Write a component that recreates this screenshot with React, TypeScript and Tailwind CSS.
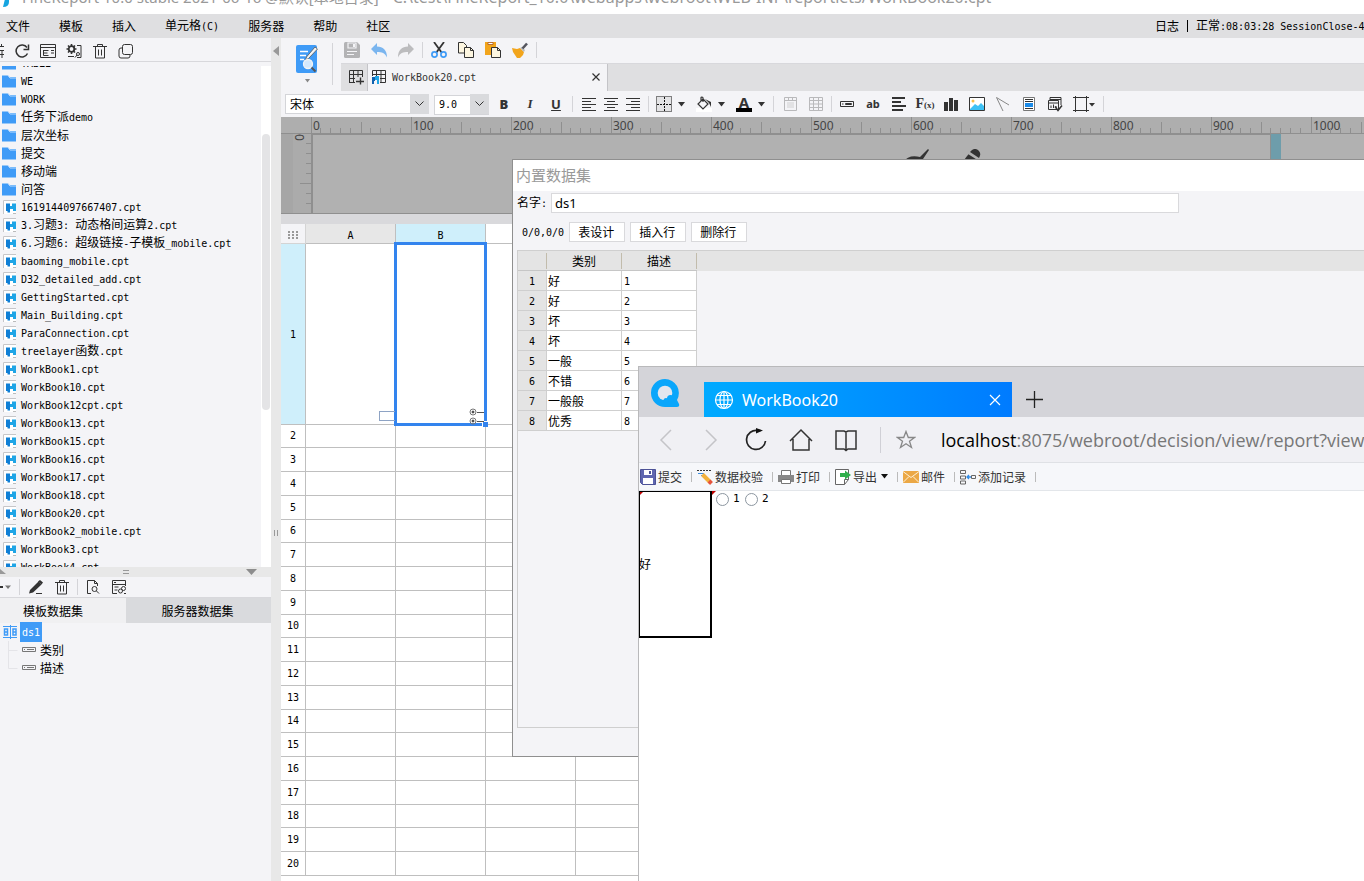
import type { ReactNode } from "react";

const CJK = "font-['Noto_Sans_CJK_SC',sans-serif] text-[12px]";
const MONO = "font-['DejaVu_Sans_Mono',monospace] text-[10px]";

/* Chinese runs keep the 12px face, Latin runs use the half-width face. */
function T({ children }: { children: string }) {
  const parts = children.match(/[\x00-\x7f]+|[^\x00-\x7f]+/g) ?? [];
  return (
    <span className="whitespace-pre">
      {parts.map((p, i) => (
        <span key={i} className={/^[\x00-\x7f]/.test(p) ? MONO : CJK}>
          {p}
        </span>
      ))}
    </span>
  );
}

function Svg({ children, w = 16, h = 16 }: { children: ReactNode; w?: number; h?: number }) {
  return (
    <svg width={w} height={h} viewBox={`0 0 ${w} ${h}`} fill="none" stroke="#333" className="block shrink-0" aria-hidden="true">
      {children}
    </svg>
  );
}

function Btn({ label, children }: { label: string; children: ReactNode }) {
  return (
    <button type="button" aria-label={label} className="flex shrink-0 items-center justify-center">
      {children}
    </button>
  );
}

const Sep = ({ tight = false }: { tight?: boolean }) => (
  <span className={`${tight ? "mx-[7px]" : "mx-2"} h-4 w-px shrink-0 bg-[#d4d4d8]`} />
);

const Caret = () => (
  <Svg w={7} h={5}>
    <path d="M0 0h7L3.500 4.500z" fill="#333" stroke="none" />
  </Svg>
);

/* ---------- menu ---------- */

const MENUS = ["文件", "模板", "插入", "单元格(C)", "服务器", "帮助", "社区"];

function MenuBar() {
  return (
    <nav className="flex h-6 shrink-0 items-center justify-between overflow-hidden bg-[#dfdfe1] pl-1.5 leading-6">
      <div className="flex gap-[29px]">
        {MENUS.map((m) => (
          <button key={m} type="button" className="leading-6">
            <T>{m}</T>
          </button>
        ))}
      </div>
      <div className="flex w-[209px] items-center gap-2 overflow-hidden">
        <T>日志</T>
        <span className="h-3 w-px shrink-0 bg-black" />
        <T>正常:08:03:28 SessionClose-4</T>
      </div>
    </nav>
  );
}

/* ---------- left side ---------- */

const Folder = () => (
  <Svg>
    <path d="M2 2.500h6l1.500 1.500H16v10.500H2z" fill="#3f9bf7" stroke="none" />
    <path d="M8 2.500l2 2.500H16" stroke="#b9dcff" />
  </Svg>
);

const CptFile = () => (
  <Svg>
    <path d="M3 1h13v14H3z" fill="#fff" stroke="none" />
    <path d="M3.500 15V1.500H16" stroke="#c6c6c9" />
    <path d="M6 4.500h4v9H7.500V12H6z" fill="#0f7fd6" stroke="none" />
    <path d="M10 7h2V4.500h4V12h-3v-2h-3z" fill="#1fa5e6" stroke="none" />
    <path d="M13 14.500h3" stroke="#bbb" />
  </Svg>
);

const FOLDERS = ["TABLE", "WE", "WORK", "任务下派demo", "层次坐标", "提交", "移动端", "问答"];
const FILES = [
  "1619144097667407.cpt",
  "3.习题3: 动态格间运算2.cpt",
  "6.习题6: 超级链接-子模板_mobile.cpt",
  "baoming_mobile.cpt",
  "D32_detailed_add.cpt",
  "GettingStarted.cpt",
  "Main_Building.cpt",
  "ParaConnection.cpt",
  "treelayer函数.cpt",
  "WorkBook1.cpt",
  "WorkBook10.cpt",
  "WorkBook12cpt.cpt",
  "WorkBook13.cpt",
  "WorkBook15.cpt",
  "WorkBook16.cpt",
  "WorkBook17.cpt",
  "WorkBook18.cpt",
  "WorkBook20.cpt",
  "WorkBook2_mobile.cpt",
  "WorkBook3.cpt",
  "WorkBook4.cpt",
];

const Trash = () => (
  <Svg>
    <path d="M1 3.500h14M5.500 3V1.500h5V3M3.500 4v11h9V4M6.500 6.500v6M9.500 6.500v6" />
  </Svg>
);

function LeftPanel() {
  return (
    <aside className="flex w-[271px] shrink-0 flex-col bg-[#f4f4f7]">
      <div className="flex h-6 shrink-0 items-center gap-2.5 overflow-hidden border-b border-[#d8d8dc] pt-0.5">
        <Btn label="重命名">
          <Svg w={4}>
            <path d="M0 3.500h4M0 7.500h4M2 7v8M0 11.500h4M1.500 1v3" />
          </Svg>
        </Btn>
        <Btn label="刷新">
          <Svg>
            <path d="M13.500 10.500A6 6 0 1 1 13 4.500" strokeWidth="1.500" />
            <path d="M14.500 1.500v5h-5" strokeWidth="1.500" />
          </Svg>
        </Btn>
        <Btn label="目录">
          <Svg>
            <path d="M.5 1.500h15v13H.5zM.5 4.500h15M3.500 7v5.500M3.500 7.500h5M3.500 10h4M3.500 12.500h5M11 7.500h3M11 10h3" />
          </Svg>
        </Btn>
        <Btn label="设置">
          <Svg>
            <circle cx="5.500" cy="6" r="2.800" strokeWidth="1.800" />
            <path d="M5.500 1v2M5.500 9v2M.5 6h2M8.500 6h2M2 2.500l1.500 1.500M9 2.500L7.500 4M2 9.500L3.500 8M9 9.500L7.500 8" strokeWidth="1.600" />
            <path d="M11 2.500h4v12h-4M2 13.500h6" />
            <circle cx="12" cy="11" r="1.500" />
            <path d="M11 12l-2 2.500" />
          </Svg>
        </Btn>
        <Btn label="删除">
          <Trash />
        </Btn>
        <Btn label="复制">
          <Svg>
            <rect x="4.500" y="1.500" width="10" height="10" rx="2" />
            <path d="M4 5H3a2 2 0 0 0-2 2v6a2 2 0 0 0 2 2h7a2 2 0 0 0 2-2v-1" />
          </Svg>
        </Btn>
      </div>

      <div className="mt-1 flex h-[501px] shrink-0 overflow-hidden">
        <ul className="-mt-3 min-w-0 flex-1">
          {FOLDERS.map((f) => (
            <li key={f} className="flex h-[18px] items-center gap-[5px] leading-[18px]">
              <Folder />
              <T>{f}</T>
            </li>
          ))}
          {FILES.map((f) => (
            <li key={f} className="flex h-[18px] items-center gap-[5px] leading-[18px]">
              <CptFile />
              <T>{f}</T>
            </li>
          ))}
        </ul>
        <div className="w-2.5 bg-white px-px pt-[68px]">
          <div className="h-[276px] rounded-full bg-[#e4e4e6]" />
        </div>
      </div>

      <div className="flex h-2.5 shrink-0 items-center justify-between bg-[#e8e8e8] pr-3.5">
        <Svg w={6} h={6}>
          <path d="M0 0l6 5H0z" fill="#999" stroke="none" />
        </Svg>
        <Svg w={6} h={6}>
          <path d="M0 1.500h6M0 4.500h6" stroke="#999" />
        </Svg>
        <Svg w={11} h={6}>
          <path d="M0 0h11L5.500 6z" fill="#8d8d8d" stroke="none" />
        </Svg>
      </div>

      <div className="flex h-[21px] shrink-0 items-center overflow-hidden border-b border-[#d8d8dc]">
        <Btn label="添加数据集">
          <Svg w={11}>
            <path d="M0 8h3" strokeWidth="2" />
            <path d="M5 6.500h6L8 10z" fill="#777" stroke="none" />
          </Svg>
        </Btn>
        <Sep />
        <div className="flex gap-2.5">
          <Btn label="编辑">
            <Svg>
              <path d="M2 11L10.500 2.500l3 3L5 13.500 1 14.500z" fill="#333" stroke="none" />
              <path d="M10 2.500l2-1.500 3 2.500-1.500 2z" fill="#333" stroke="none" />
              <path d="M8 14.500h6" />
            </Svg>
          </Btn>
          <Btn label="删除数据集">
            <Trash />
          </Btn>
        </div>
        <Sep tight />
        <div className="flex gap-2.5">
          <Btn label="预览">
            <Svg>
              <path d="M6 14.500H2.500v-13h7l3 3V7M9.500 1.500v3h3" />
              <circle cx="9.500" cy="10" r="2.500" />
              <path d="M11.500 12l2.500 2.500" />
            </Svg>
          </Btn>
          <Btn label="连接">
            <Svg>
              <path d="M14.500 7V1.500H1.500v13H6M1.500 5.500h13M3 3.500h2M3.500 8h4M3.500 11h3" />
              <circle cx="9.500" cy="12" r="2" />
              <circle cx="12.500" cy="9.500" r="2" />
              <path d="M13 14.500h2" />
            </Svg>
          </Btn>
        </div>
      </div>

      <div className="flex h-[25px] shrink-0 leading-6">
        <button type="button" className="w-[126px] bg-[#f0f0f2] pr-5 leading-6">
          <T>模板数据集</T>
        </button>
        <button type="button" className="flex-1 bg-[#d9dadd] pr-0.5 leading-6">
          <T>服务器数据集</T>
        </button>
      </div>
      <ul className="leading-[18px]">
        <li className="flex h-[18px] items-center gap-0.5 pl-0.5">
          <Svg>
            <path d="M1 2.500h14M1 13.500h14M8.500 1v14" stroke="#3f9bf7" />
            <path d="M2.500 5h3v6h-3zM2.500 8h3M11 5h3v6h-3zM11 8h3" stroke="#3f9bf7" strokeWidth="1.500" />
          </Svg>
          <span className="bg-[#3f9bf7] px-0.5 text-white">
            <T>ds1</T>
          </span>
        </li>
        {["类别", "描述"].map((f) => (
          <li key={f} className="flex h-[18px] items-center gap-1 pl-2">
            <Svg w={28} h={18}>
              <path d={f === "类别" ? "M.5 0v18M.5 9.500h9" : "M.5 0v9.500h9"} stroke="#e4e4e8" />
              <path d="M14.500 6.500h13v4h-13z" stroke="#777" />
              <path d="M16 8.500h1M19 8.500h7" stroke="#777" />
            </Svg>
            <T>{f}</T>
          </li>
        ))}
      </ul>
    </aside>
  );
}

/* ---------- toolbars ---------- */

function QuickTools() {
  return (
    <div className="flex h-[25px] items-center pb-0.5 pl-[3px]">
      <div className="flex gap-[11px]">
        <Btn label="保存">
          <Svg>
            <path d="M0 1.500Q0 0 1.500 0H13l3 3v11.500q0 1.500-1.500 1.500h-13Q0 16 0 14.500z" fill="#b3b3b5" stroke="none" />
            <path d="M4 1h8v5H4zM3 9.500h10M3 12.500h7" stroke="#f4f4f7" strokeWidth="1.200" />
            <path d="M9 2h2v3H9z" fill="#f4f4f7" stroke="none" />
          </Svg>
        </Btn>
        <Btn label="撤销">
          <Svg>
            <path d="M6 1v3.500c6 0 10 3.500 10 11-2-4.500-5-5.500-10-5.500v3L0 7z" fill="#7ab5ef" stroke="none" />
          </Svg>
        </Btn>
        <Btn label="重做">
          <Svg>
            <path d="M10 1v3.500c-6 0-10 3.500-10 11 2-4.500 5-5.500 10-5.500v3L16 7z" fill="#bcbcbe" stroke="none" />
          </Svg>
        </Btn>
      </div>
      <Sep />
      <div className="flex gap-[11px]">
        <Btn label="剪切">
          <Svg>
            <path d="M3 0l8 11M13 0L5 11" strokeWidth="1.800" />
            <circle cx="3.500" cy="12.500" r="2.600" stroke="#3f9bf7" strokeWidth="1.700" />
            <circle cx="12.500" cy="12.500" r="2.600" stroke="#3f9bf7" strokeWidth="1.700" />
          </Svg>
        </Btn>
        <Btn label="复制单元格">
          <Svg>
            <path d="M.5.500h5l3 3V11h-8z" fill="#fdf6e0" />
            <path d="M6.500 5.500h6l3 3v7h-9z" fill="#fdf6e0" />
            <path d="M12.500 5.500v3h3" />
          </Svg>
        </Btn>
        <Btn label="粘贴">
          <Svg>
            <path d="M0 0h11v13H0z" fill="#f2a51c" stroke="none" />
            <path d="M3 .5h5v2H3z" fill="#fff" stroke="#a8561d" strokeWidth=".8" />
            <path d="M6.500 5.500h6l3 3v7h-9z" fill="#fdf6e0" />
            <path d="M12.500 5.500v3h3" />
          </Svg>
        </Btn>
        <Btn label="格式刷">
          <Svg>
            <path d="M0 6l5 1 3-1 4 4-1 3-3 3H5L1 10z" fill="#f2a51c" stroke="none" />
            <path d="M8 6l2-1 3 3-1 2z" fill="#bbb" stroke="none" />
            <path d="M10.500 6.500L15 1.500" stroke="#55565f" strokeWidth="2.600" />
          </Svg>
        </Btn>
      </div>
      <Sep />
    </div>
  );
}

const GridIcon = ({ children }: { children?: ReactNode }) => (
  <Svg>
    <path d="M1.500 14V1.500h13V9M1.500 5.500h13M1.500 9.500h13M5.500 1.500V14M10 1.500V9M1.500 13.500H7" />
    {children}
  </Svg>
);

function TabStrip() {
  return (
    <div className="flex h-7 border-t border-[#d8d8dc] bg-[#dfdfe1]">
      <button type="button" aria-label="新建" className="flex w-[27px] items-center justify-center border-r border-[#c4c4c8] pb-0.5 pl-1">
        <GridIcon>
          <path d="M7 8h9v8H7z" fill="#dfdfe1" stroke="none" />
          <path d="M8 12.500h8M12.500 8.500v7" strokeWidth="1.400" />
        </GridIcon>
      </button>
      <div className="flex w-60 items-center gap-[5px] border-r border-[#c4c4c8] bg-[#f4f4f7] pr-[5px] pb-0.5 pl-[3px] leading-6 text-[#333]">
        <Svg>
          <path d="M1.500 7V1.500h13v12H9M1.500 5.500h13M9 9.500h5.500M5.500 1.500V7M10 1.500V14" />
          <path d="M1 8h3v4H3v3H1z" fill="#0f62b0" stroke="none" />
          <path d="M4 7h4v8H6v-4H4z" fill="#1fa5e6" stroke="none" />
        </Svg>
        <span className="flex-1">
          <T>WorkBook20.cpt</T>
        </span>
        <Btn label="关闭">
          <Svg w={12} h={12}>
            <path d="M2.500 2.500l7 7M9.500 2.500l-7 7" strokeWidth="1.200" />
          </Svg>
        </Btn>
      </div>
    </div>
  );
}

const AlignIcon = ({ d }: { d: string }) => (
  <Svg>
    <path d={d} />
  </Svg>
);

function FormatBar() {
  const selectCls = "h-full w-full appearance-none border border-[#d4d5d9] bg-white pl-1 text-black outline-none";
  const arrow = (
    <span className="pointer-events-none absolute inset-y-0 right-0 flex w-[19px] items-center justify-center bg-[#d9dadd]">
      <Svg w={9} h={6}>
        <path d="M.5.500l4 4 4-4" />
      </Svg>
    </span>
  );
  return (
    <div className="flex h-[26px] shrink-0 items-center overflow-hidden pl-1">
      <label className="relative h-5 w-36 shrink-0">
        <select aria-label="字体" className={`${selectCls} ${CJK}`}>
          <option>宋体</option>
        </select>
        {arrow}
      </label>
      <label className="relative ml-[5px] h-5 w-[55px] shrink-0">
        <select aria-label="字号" className={`${selectCls} ${MONO}`}>
          <option>9.0</option>
        </select>
        {arrow}
      </label>
      <div className="ml-[7px] flex gap-2.5 font-['Noto_Sans',sans-serif] text-[13px] leading-4 text-[#333]">
        <button type="button" className="w-4 font-black">B</button>
        <button type="button" className="w-4 font-['Liberation_Serif',serif] font-bold italic">I</button>
        <button type="button" className="w-4 font-bold underline">U</button>
      </div>
      <Sep />
      <div className="flex gap-1.5">
        <Btn label="左对齐"><AlignIcon d="M1 2.500h14M1 5.500h9M1 8.500h14M1 11.500h9M1 14.500h14" /></Btn>
        <Btn label="居中"><AlignIcon d="M1 2.500h14M4 5.500h8M1 8.500h14M4 11.500h8M1 14.500h14" /></Btn>
        <Btn label="右对齐"><AlignIcon d="M1 2.500h14M6 5.500h9M1 8.500h14M6 11.500h9M1 14.500h14" /></Btn>
      </div>
      <Sep tight />
      <div className="flex gap-[11px]">
        <button type="button" aria-label="边框" className="flex items-center gap-1.5">
          <Svg>
            <path d="M.5.500h15v15H.5z" fill="#e3e3e5" stroke="#111" strokeDasharray="1 1" />
            <path d="M8.500 1v14M1 8.500h14" stroke="#111" strokeDasharray="2 1" />
          </Svg>
          <Caret />
        </button>
        <button type="button" aria-label="填充" className="flex items-center gap-1.5">
          <Svg>
            <path d="M0 12h16v4H0z" fill="#fff" stroke="none" />
            <path d="M7 3l5 5-5 5-5-5zM5 6V2q0-1 1-1t1 1v4" strokeWidth="1.200" />
            <path d="M9 3l6 3v5l-2-4z" fill="#333" stroke="none" />
          </Svg>
          <Caret />
        </button>
        <button type="button" aria-label="字体颜色" className="flex items-center gap-1.5">
          <span className="flex h-4 w-4 items-center justify-center border-b-4 border-black font-['Noto_Sans',sans-serif] text-[15px] leading-3 font-bold text-[#333]">
            A
          </span>
          <Caret />
        </button>
      </div>
      <Sep />
      <div className="flex gap-2.5">
        <Btn label="合并">
          <Svg>
            <path d="M2.500 1.500h12v13h-12zM2.500 4.500h12M6.500 1.500v3M10.500 1.500v3" stroke="#b9b9bb" />
            <path d="M5 6h7v6H5z" fill="#e2e2e4" stroke="none" />
          </Svg>
        </Btn>
        <Btn label="拆分">
          <Svg>
            <path d="M1.500 1.500h13v13h-13zM1.500 4.500h13M1.500 8h13M1.500 11.500h13M5.500 1.500v13M10.500 1.500v13" stroke="#b9b9bb" />
          </Svg>
        </Btn>
      </div>
      <Sep tight />
      <div className="flex items-center gap-2.5">
        <Btn label="控件">
          <Svg>
            <path d="M1.500 5.500h13v5h-13z" />
            <path d="M3 8h1.500M6.500 7.500h6v1h-6z" />
          </Svg>
        </Btn>
        <button type="button" className="flex w-4 justify-center font-['Noto_Sans',sans-serif] text-[11px] leading-4 font-bold text-[#333]">ab</button>
        <Btn label="富文本">
          <Svg>
            <path d="M1 2h13M1 6h9M1 10h14M1 14h11" strokeWidth="2" />
          </Svg>
        </Btn>
        <button
          type="button"
          className="flex w-4 items-baseline justify-center whitespace-nowrap font-['Liberation_Serif',serif] text-[14px] leading-4 font-bold text-[#333]"
        >
          F<span className="text-[9px]">(x)</span>
        </button>
        <Btn label="图表">
          <Svg>
            <path d="M1 6h4v9H1zM6 2h4v13H6zM11 4h4v11h-4z" fill="#333" stroke="none" />
          </Svg>
        </Btn>
        <Btn label="图片">
          <Svg>
            <path d="M.5 1.500h15v13H.5z" fill="#fff" />
            <circle cx="4" cy="5" r="1.500" fill="#f7c04a" stroke="none" />
            <path d="M1 13l5-5 3 2 3-3 3 3v4H1z" fill="#3dc1f5" stroke="none" />
          </Svg>
        </Btn>
        <Btn label="斜线">
          <Svg>
            <path d="M1.500 1.500L14 9M1.500 1.500L8 15" stroke="#888" />
          </Svg>
        </Btn>
        <Btn label="子报表">
          <Svg>
            <path d="M2.500 1.500h11v13h-11z" fill="#fff" stroke="#777" />
            <path d="M4 3.500h8M4 5.500h8M4 12.500h8" />
            <path d="M4 7h8v4H4z" fill="#1a8ae8" stroke="none" />
          </Svg>
        </Btn>
        <Btn label="悬浮元素">
          <Svg>
            <path d="M3 4V1.500h11V9M3 3.500h11M1.500 4.500h10v9h-10zM1.500 7h10M4 12V9.500M6.500 12V8.500M9 12v-2" />
            <path d="M8 10.500l3 4 4-5" strokeWidth="1.500" />
          </Svg>
        </Btn>
        <button type="button" aria-label="形状" className="flex items-center">
          <Svg>
            <path d="M2.500 0v16M13.500 0v16M0 1.500h16M0 14.500h16" />
          </Svg>
          <Svg w={6} h={5}>
            <path d="M0 1h6L3 4.500z" fill="#333" stroke="none" />
          </Svg>
        </button>
      </div>
      <Sep />
    </div>
  );
}

/* ---------- ruler ---------- */

const HUNDREDS = Array.from({ length: 20 }, (_, i) => i * 100);
const TICKS = [10, 20, 30, 40, 60, 70, 80, 90].map((x) => `M${x}.5 11v5`).join("");

function Ruler() {
  return (
    <div className="flex h-[97px] shrink-0 flex-col overflow-hidden bg-[#b1b1b1]">
      <div className="flex h-[17px] shrink-0 overflow-hidden border-b border-[#8f8f8f] bg-[#aeaeae] pl-[29px]">
        {HUNDREDS.map((n) => (
          <div key={n} className="relative w-[100px] shrink-0 pl-[3px] font-['Noto_Sans',sans-serif] text-[12px] leading-[17px] text-[#444]">
            <svg width="100" height="16" className="absolute inset-0" fill="none" stroke="#8f8f8f" aria-hidden="true">
              <path d={`M1.5 0v16M51.5 5v11${TICKS}`} />
            </svg>
            {n}
          </div>
        ))}
      </div>
      <div className="flex min-h-0 flex-1 border-b border-[#8f8f8f]">
        <div className="flex w-8 justify-end border-r-2 border-[#8f8f8f] bg-[#a6a6a6]">
          <div className="flex w-[18px] items-start justify-between bg-[#ababab]">
            <span className="font-['Noto_Sans',sans-serif] text-[12px] leading-3 text-[#444] [writing-mode:vertical-rl]">0</span>
            <svg width="11" height="79" className="-ml-3 shrink-0" fill="none" stroke="#8f8f8f" aria-hidden="true">
              <path d="M6 9.500h5M6 19.500h5M6 29.500h5M6 39.500h5M0 49.500h11M6 59.500h5M6 69.500h5" />
            </svg>
          </div>
        </div>
        <div className="flex w-[958px] shrink-0 items-start justify-center gap-8 border-t border-r border-[#8f8f8f] pt-3.5 pl-[300px]">
          <Svg w={26} h={26}>
            <path d="M0 13Q6 5 17 8L25 0l1 1-8 12q-4 8-11 12z" fill="#333" stroke="none" />
          </Svg>
          <Svg w={20} h={26}>
            <path d="M9 3q4-5 8-2t1 8z" fill="#333" stroke="none" />
            <path d="M8 4.500l9 6-11 13-6 2V15z" fill="#333" stroke="none" />
            <path d="M7 4l11 7" stroke="#b1b1b1" strokeWidth="1.500" />
          </Svg>
        </div>
        <div className="w-2.5 shrink-0 bg-[#6e9dab]" />
      </div>
    </div>
  );
}

/* ---------- sheet ---------- */

const ROWS = Array.from({ length: 19 }, (_, i) => i + 2);
const COLS = Array.from({ length: 14 }, (_, i) => i);

function Sheet() {
  const cell = "border-r border-b border-[#bfbfbf]";
  return (
    <div className="relative min-h-0 flex-1 overflow-hidden bg-white">
      <table className="w-max table-fixed border-separate border-spacing-0 text-center leading-4">
        <colgroup>
          <col className="w-[25px]" />
          {COLS.map((c) => (
            <col key={c} className="w-[90px]" />
          ))}
        </colgroup>
        <thead>
          <tr className="h-5">
            <th className="h-5 w-[25px] border-r border-b border-[#d4d4d4] bg-[#f4f4f7] p-0">
              <div className="flex justify-center pt-0.5">
                <Svg w={10} h={8}>
                  <path d="M0 1h10M0 4h10M0 7h10" stroke="#999" strokeWidth="2" strokeDasharray="2 2" />
                </Svg>
              </div>
            </th>
            {COLS.map((c) => (
              <th
                key={c}
                className={`${cell} w-[90px] p-0 font-normal ${c === 0 ? "bg-[#e7e7e7]" : c === 1 ? "bg-[#cfeffb]" : "bg-white"}`}
              >
                <div className="flex h-[19px] items-center justify-center pt-0.5">{c === 0 ? <T>A</T> : c === 1 ? <T>B</T> : null}</div>
              </th>
            ))}
          </tr>
        </thead>
        <tbody>
          <tr className="h-[181px]">
            <th className={`${cell} bg-[#cfeffb] p-0 font-normal`}>
              <T>1</T>
            </th>
            {COLS.map((c) => (
              <td key={c} className={`${cell} p-0`} />
            ))}
          </tr>
          {ROWS.map((r, i) => (
            <tr key={r} className={i % 4 === 0 ? "h-[23px]" : "h-6"}>
              <th className={`${cell} p-0 font-['DejaVu_Sans_Mono',monospace] text-[10px] leading-4 font-normal`}>{r}</th>
              {COLS.map((c) => (
                <td key={c} className={`${cell} p-0`} />
              ))}
            </tr>
          ))}
        </tbody>
      </table>
      <div className="absolute top-[18px] left-[113px] h-[184px] w-[93px] border-3 border-[#3384ee]">
        <span className="absolute -right-1 -bottom-1 size-1.5 border-t border-l border-white bg-[#3384ee]" />
        <span className="absolute right-0 -bottom-0.5">
          <Svg w={15} h={18}>
            <circle cx="4" cy="5" r="3" stroke="#777" />
            <circle cx="4" cy="5" r="1" fill="#444" stroke="#444" />
            <circle cx="4" cy="14" r="3" stroke="#777" />
            <circle cx="4" cy="14" r="1" fill="#444" stroke="#444" />
            <path d="M8 5.500h7M8 14.500h7" stroke="#555" />
          </Svg>
        </span>
      </div>
      <span className="absolute top-[187px] left-[98px] h-2.5 w-4 border border-r-0 border-[#8ea3c4]" />
    </div>
  );
}

/* ---------- data set dialog ---------- */

const DATA: [string, string][] = [
  ["好", "1"],
  ["好", "2"],
  ["坏", "3"],
  ["坏", "4"],
  ["一般", "5"],
  ["不错", "6"],
  ["一般般", "7"],
  ["优秀", "8"],
];

function DataDialog() {
  return (
    <section className="absolute top-[159px] right-0 left-[512px] flex h-[598px] flex-col border border-r-0 border-[#8f8f8f] bg-[#f4f4f7]">
      <h2 className="h-[31px] shrink-0 bg-white pl-[3px] font-['Noto_Sans_CJK_SC',sans-serif] text-[15px] leading-[29px] text-[#999]">内置数据集</h2>
      <div className="mt-0.5 flex h-5 shrink-0 items-center gap-[5px] pl-1">
        <label htmlFor="ds-name" className="w-[29px] leading-5">
          <T>名字:</T>
        </label>
        <input
          id="ds-name"
          defaultValue="ds1"
          className="h-5 w-[628px] border border-[#d9d9dc] bg-white pl-[3px] font-['Noto_Sans',sans-serif] text-[13px] text-black outline-none"
        />
      </div>
      <div className="mt-[9px] flex h-5 shrink-0 items-center gap-[5px] pl-[9px] leading-5">
        <T>0/0,0/0</T>
        {["表设计", "插入行", "删除行"].map((b) => (
          <button key={b} type="button" className="h-5 w-14 border border-[#d9d9dc] bg-white pr-0.5 leading-[18px]">
            <T>{b}</T>
          </button>
        ))}
      </div>
      <div className="mt-2 mb-7 ml-1 min-h-0 flex-1 border border-r-0 border-[#cfcfcf]">
        <div className="h-full bg-[linear-gradient(#e4e4e4_20px,transparent_20px)]">
          <table className="w-[179px] table-fixed border-separate border-spacing-0 leading-4">
            <thead>
              <tr className="h-5">
                <th className="w-[29px] border-b border-[#c6c6c6] p-0">
                  <div className="h-4 border-r border-[#c2bcac]" />
                </th>
                {["类别", "描述"].map((h) => (
                  <th key={h} className="w-[75px] border-b border-[#c6c6c6] p-0 font-normal">
                    <div className="h-4 border-r border-[#c2bcac]">
                      <T>{h}</T>
                    </div>
                  </th>
                ))}
              </tr>
            </thead>
            <tbody>
              {DATA.map(([a, b], i) => (
                <tr key={i} className="h-5">
                  <th className="border-r border-b border-[#cfcfcf] bg-[#e4e4e4] p-0 font-normal"><T>{String(i + 1)}</T></th>
                  <td className="border-r border-b border-[#cfcfcf] bg-white p-0 pl-px"><T>{a}</T></td>
                  <td className="border-r border-b border-[#cfcfcf] bg-white p-0 pl-0.5"><T>{b}</T></td>
                </tr>
              ))}
            </tbody>
          </table>
        </div>
      </div>
    </section>
  );
}

/* ---------- browser window ---------- */

function NavIcon({ label, d, color = "#333", width = 1.5 }: { label: string; d: string; color?: string; width?: number }) {
  return (
    <button type="button" aria-label={label} className="shrink-0">
      <Svg w={24} h={24}>
        <path d={d} stroke={color} strokeWidth={width} />
      </Svg>
    </button>
  );
}

function ReportTool({ label, icon, caret = false }: { label: string; icon: ReactNode; caret?: boolean }) {
  return (
    <>
      <button type="button" className="flex shrink-0 items-center gap-0.5 leading-7 text-[#333]">
        {icon}
        <T>{label}</T>
        {caret && (
          <span className="ml-0.5">
            <Svg w={7} h={5}>
              <path d="M0 0h7L3.500 4.500z" fill="#111" stroke="none" />
            </Svg>
          </span>
        )}
      </button>
      <span className="mr-[5px] ml-[9px] h-2.5 w-px shrink-0 bg-[#bbb]" />
    </>
  );
}

function BrowserWindow() {
  return (
    <section className="absolute top-[366px] right-0 bottom-0 left-[638px] flex flex-col overflow-hidden border-t border-l border-[#b9b9bb] bg-white">
      <div className="flex h-[50px] shrink-0 items-end bg-[#d4d4d9] pl-[11px]">
        <div className="self-center pt-0.5">
          <Svg w={30} h={30}>
            <path d="M15 1a14 14 0 1 0 0 28h12q3 0 2-3l-2-4A14 14 0 0 0 15 1z" fill="#09a6fb" stroke="none" />
            <circle cx="15" cy="15" r="7.300" fill="#e2e6ee" stroke="none" />
            <circle cx="20.500" cy="20.500" r="3.500" fill="#09a6fb" stroke="none" />
            <circle cx="16" cy="22.500" r="2.500" fill="#09a6fb" stroke="none" />
          </Svg>
        </div>
        <div className="ml-6 flex h-[35px] w-[308px] shrink-0 items-center bg-linear-to-r from-[#00aaff] to-[#007bff] pr-2.5 pl-2.5 text-white">
          <Svg w={20} h={20}>
            <g stroke="#fff" strokeWidth="1.200">
              <circle cx="10" cy="10" r="8.500" />
              <ellipse cx="10" cy="10" rx="4" ry="8.500" />
              <path d="M10 1.500v17M1.500 10h17M3 5.500h14M3 14.500h14" />
            </g>
          </Svg>
          <span className="flex-1 pl-2 font-['Noto_Sans',sans-serif] text-[16px] leading-6">WorkBook20</span>
          <Btn label="关闭标签">
            <Svg w={14} h={14}>
              <path d="M2 2l10 10M12 2L2 12" stroke="#fff" strokeWidth="1.200" />
            </Svg>
          </Btn>
        </div>
        <div className="flex h-[35px] items-center pl-3.5">
          <Btn label="新标签">
            <Svg w={17} h={17}>
              <path d="M0 8.500h17M8.500 0v17" stroke="#222" strokeWidth="1.300" />
            </Svg>
          </Btn>
        </div>
      </div>

      <div className="flex h-[46px] shrink-0 items-center border-b border-[#dfe1e5] bg-[#f0f0f4] pl-[15px]">
        <div className="flex gap-[21px]">
          <NavIcon label="后退" d="M17 2L7 12l10 10" color="#c4c4c8" />
          <NavIcon label="前进" d="M7 2l10 10L7 22" color="#c4c4c8" />
          <button type="button" aria-label="重新载入">
            <Svg w={24} h={24}>
              <path d="M21.500 13a9.500 9.500 0 1 1-8-10.500h3" stroke="#222" strokeWidth="1.700" />
              <path d="M12 0l7 2.500-7 3z" fill="#111" stroke="none" />
            </Svg>
          </button>
          <NavIcon label="主页" d="M1 13L12 2l11 11M4 11v11h16V11" />
          <NavIcon label="书签" d="M12 4v18M12 4L10 3H2v18h8l2 1.500 2-1.500h8V3h-8z" />
        </div>
        <span className="mr-[15px] ml-[22px] h-[26px] w-px shrink-0 bg-[#d0d0d6]" />
        <Btn label="收藏">
          <Svg w={20} h={20}>
            <path d="M10 1.500l2.300 6h6.200l-5 3.700 2 6.300L10 13.700 4.500 17.500l2-6.300-5-3.700h6.200z" stroke="#888" strokeWidth="1.300" />
          </Svg>
        </Btn>
        <p className="ml-[25px] min-w-0 flex-1 overflow-hidden whitespace-nowrap font-['Open_Sans','Noto_Sans',sans-serif] text-[18px] leading-7 text-[#777]">
          <span className="text-black">localhost</span>:8075/webroot/decision/view/report?view
        </p>
      </div>

      <div className="flex h-7 shrink-0 items-center overflow-hidden border-b border-[#e3e6ea] bg-[#f6f7fa]">
        <ReportTool
          label="提交"
          icon={
            <Svg w={17}>
              <path d="M1.500.500h15v15h-13l-2-2z" fill="#5f66b0" stroke="#4c5296" />
              <path d="M5 1h8v5H5zM4 9h10v6H4z" fill="#fff" stroke="none" />
              <path d="M10 2h2v3h-2z" fill="#4c5296" stroke="none" />
            </Svg>
          }
        />
        <ReportTool
          label="数据校验"
          icon={
            <Svg w={16}>
              <path d="M0 1.500h14" strokeDasharray="2 1" />
              <path d="M1 4.500h6M4 6.500h3" stroke="#3b8ee0" />
              <path d="M5.500 5.500l7.500 7.500" stroke="#f2b13e" strokeWidth="4" />
              <path d="M12 12l2.500 2.500" stroke="#e5533d" strokeWidth="4" />
            </Svg>
          }
        />
        <ReportTool
          label="打印"
          icon={
            <Svg w={16}>
              <path d="M3.500 6V1.500h9V6" fill="#fff" stroke="#777" />
              <path d="M0 6h16v7H0z" fill="#888" stroke="none" />
              <path d="M3.500 10.500h9v4h-9z" fill="#fff" stroke="#777" />
            </Svg>
          }
        />
        <ReportTool
          label="导出"
          caret
          icon={
            <Svg w={16}>
              <path d="M.5.500h13v10l-4 5h-9z" fill="#fff" stroke="#666" />
              <path d="M13.500 10.500h-4v5" stroke="#666" />
              <path d="M5 4h5V1.500L16 6l-6 4.500V8H5z" fill="#2fae4a" stroke="none" />
            </Svg>
          }
        />
        <ReportTool
          label="邮件"
          icon={
            <Svg w={16}>
              <path d="M0 2h16v12H0z" fill="#eba846" stroke="none" />
              <path d="M0 2.500l8 6 8-6M0 13.500l6-6M16 13.500l-6-6" stroke="#fff1d8" />
            </Svg>
          }
        />
        <ReportTool
          label="添加记录"
          icon={
            <Svg w={16}>
              <path d="M.5 1.500h5v3h-5zM.5 7h5v3h-5zM.5 12h5v3h-5zM11.500 6.500h4v3h-4z" stroke="#666" />
              <path d="M7 8h4M9 6L7 8l2 2" stroke="#2f8be6" strokeWidth="1.300" />
            </Svg>
          }
        />
      </div>

      <div className="flex items-start">
        <div className="relative flex h-[147px] w-[73px] items-center border-t border-r-2 border-b-2 border-black leading-4">
          <T>好</T>
          <span className="absolute top-0 left-0 size-1 bg-[#c00000] [clip-path:polygon(0_0,100%_0,0_100%)]" />
          <span className="absolute inset-y-0 left-0 w-px bg-black" />
        </div>
        <div className="relative flex items-center gap-1 pl-1 leading-4">
          <span className="absolute top-0 left-0 size-1 bg-[#c00000] [clip-path:polygon(0_0,100%_0,0_100%)]" />
          {["1", "2"].map((v) => (
            <label key={v} className="flex items-center gap-1">
              <input type="radio" name="choice" value={v} className="size-[13px] appearance-none rounded-full border border-[#8c96a0] bg-white" />
              <span className="w-2 font-['DejaVu_Sans_Mono',monospace] text-[11px]">{v}</span>
            </label>
          ))}
        </div>
      </div>
    </section>
  );
}

/* ---------- page ---------- */

export default function App() {
  return (
    <div className="relative flex h-screen w-full flex-col overflow-hidden bg-[#f4f4f7] font-['Noto_Sans_CJK_SC',sans-serif] text-[12px] text-black">
      <header className="flex h-3.5 shrink-0 items-end gap-1.5 overflow-hidden bg-white pb-[7px]">
        <Svg w={16}>
          <path d="M3 16l2-8 4-6v9q0 5-6 5z" fill="#16a5e0" stroke="none" />
        </Svg>
        <h1 className="flex items-baseline gap-3.5 font-['Noto_Sans','Noto_Sans_CJK_SC',sans-serif] text-[15px] leading-5 whitespace-nowrap text-[#999]">
          <span>FineReport 10.0 stable 2021-06-16 @默认[本地目录]</span>
          <span className="text-[16px]">{"C:\\test\\FineReport_10.0\\webapps\\webroot\\WEB-INF\\reportlets/WorkBook20.cpt"}</span>
        </h1>
      </header>
      <MenuBar />
      <div className="flex min-h-0 flex-1">
        <LeftPanel />
        <div className="flex w-2.5 shrink-0 flex-col items-center justify-between bg-[#e8e8e8] pt-2 pb-[345px]">
          <Svg w={6} h={10}>
            <path d="M6 0v10L0 5z" fill="#999" stroke="none" />
          </Svg>
          <Svg w={4} h={6}>
            <path d="M.5 0v6M3.500 0v6" stroke="#999" />
          </Svg>
        </div>
        <main className="flex min-w-0 flex-1 flex-col">
          <div className="flex shrink-0">
            <div className="flex w-[60px] shrink-0 items-center justify-between pr-2 pb-0.5 pl-[15px]">
              <button type="button" aria-label="模板预览" className="flex flex-col items-center gap-1.5">
                <Svg w={22} h={28}>
                  <rect width="21" height="28" rx="2" fill="#3f9bf7" stroke="none" />
                  <path d="M4 6.500h8M4 10.500h6M4 14.500h4" stroke="#fff" strokeWidth="1.500" />
                  <path d="M19 2L10.500 12l-1 3 3-1.500L21.500 4z" fill="#f4f4f4" stroke="#555" strokeWidth=".8" />
                  <circle cx="12" cy="19" r="4.500" fill="#d4e9fd" stroke="#f4f4f4" strokeWidth="1.300" />
                  <path d="M15.500 22.500l4 4" stroke="#555" strokeWidth="2" />
                </Svg>
                <Svg w={5} h={4}>
                  <path d="M0 0h5L2.500 3.500z" fill="#888" stroke="none" />
                </Svg>
              </button>
              <span className="h-[42px] w-px bg-[#d4d4d8]" />
            </div>
            <div className="min-w-0 flex-1">
              <QuickTools />
              <TabStrip />
            </div>
          </div>
          <FormatBar />
          <Ruler />
          <div className="h-2.5 shrink-0 bg-[#d9d9dc]" />
          <Sheet />
        </main>
      </div>
      <DataDialog />
      <BrowserWindow />
    </div>
  );
}
